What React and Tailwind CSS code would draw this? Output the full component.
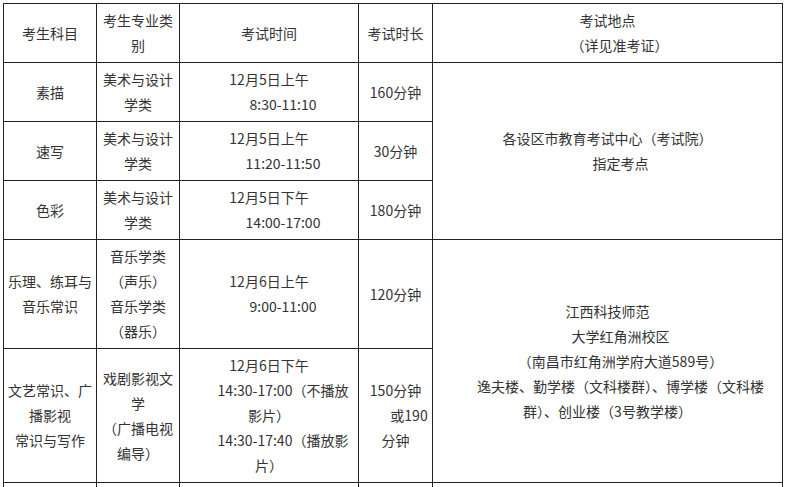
import React from "react";

function Cell({ className = "", lines }) {
  return (
    <div
      className={
        "border-r border-b border-[#222] flex flex-col items-center justify-center text-[14px] leading-[25px] text-[#333] " +
        className
      }
    >
      {lines.map((l, i) =>
        typeof l === "string" ? (
          <div key={i} className="whitespace-nowrap">
            {l}
          </div>
        ) : (
          <div key={i} className={"whitespace-nowrap " + l.c}>
            {l.t}
          </div>
        )
      )}
    </div>
  );
}

export default function App() {
  return (
    <div className="w-[788px] h-[487px] overflow-hidden bg-white font-['Noto_Sans_CJK_SC','Noto_Sans',sans-serif]">
      <div className="ml-[3px] mt-[3px] w-max border-l border-t border-[#222] grid grid-cols-[93px_83px_179px_74px_350px] grid-rows-[59px_59px_59px_59px_109px_134px_40px]">
        {/* header */}
        <Cell lines={["考生科目"]} />
        <Cell lines={["考生专业类", "别"]} />
        <Cell lines={["考试时间"]} />
        <Cell lines={["考试时长"]} />
        <Cell lines={["考试地点", { t: "（详见准考证）", c: "pl-[24px]" }]} />

        {/* 素描 */}
        <Cell lines={["素描"]} />
        <Cell lines={["美术与设计", "学类"]} />
        <Cell lines={["12月5日上午", { t: "8:30-11:10", c: "pl-[28px]" }]} />
        <Cell lines={["160分钟"]} />
        <Cell
          className="row-span-3"
          lines={["各设区市教育考试中心（考试院）", { t: "指定考点", c: "pl-[26px]" }]}
        />

        {/* 速写 */}
        <Cell lines={["速写"]} />
        <Cell lines={["美术与设计", "学类"]} />
        <Cell lines={["12月5日上午", { t: "11:20-11:50", c: "pl-[28px]" }]} />
        <Cell lines={["30分钟"]} />

        {/* 色彩 */}
        <Cell lines={["色彩"]} />
        <Cell lines={["美术与设计", "学类"]} />
        <Cell lines={["12月5日下午", { t: "14:00-17:00", c: "pl-[28px]" }]} />
        <Cell lines={["180分钟"]} />

        {/* 乐理 */}
        <Cell lines={["乐理、练耳与", "音乐常识"]} />
        <Cell lines={["音乐学类", "（声乐）", "音乐学类", "（器乐）"]} />
        <Cell lines={["12月6日上午", { t: "9:00-11:00", c: "pl-[28px]" }]} />
        <Cell lines={["120分钟"]} />
        <Cell
          className="row-span-2"
          lines={[
            "江西科技师范",
            { t: "大学红角洲校区", c: "pl-[26px]" },
            { t: "（南昌市红角洲学府大道589号）", c: "pl-[26px]" },
            { t: "逸夫楼、勤学楼（文科楼群）、博学楼（文科楼", c: "pl-[26px]" },
            "群）、创业楼（3号教学楼）",
          ]}
        />

        {/* 文艺常识 */}
        <Cell lines={["文艺常识、广", "播影视", "常识与写作"]} />
        <Cell lines={["戏剧影视文", "学", "（广播电视", "编导）"]} />
        <Cell
          lines={[
            "12月6日下午",
            { t: "14:30-17:00（不播放", c: "pl-[28px]" },
            "影片）",
            { t: "14:30-17:40（播放影", c: "pl-[28px]" },
            "片）",
          ]}
        />
        <Cell lines={["150分钟", { t: "或190", c: "pl-[27px]" }, "分钟"]} />

        {/* next row (cut off) */}
        <Cell lines={[]} />
        <Cell lines={[]} />
        <Cell lines={[]} />
        <Cell lines={[]} />
        <Cell lines={[]} />
      </div>
    </div>
  );
}
